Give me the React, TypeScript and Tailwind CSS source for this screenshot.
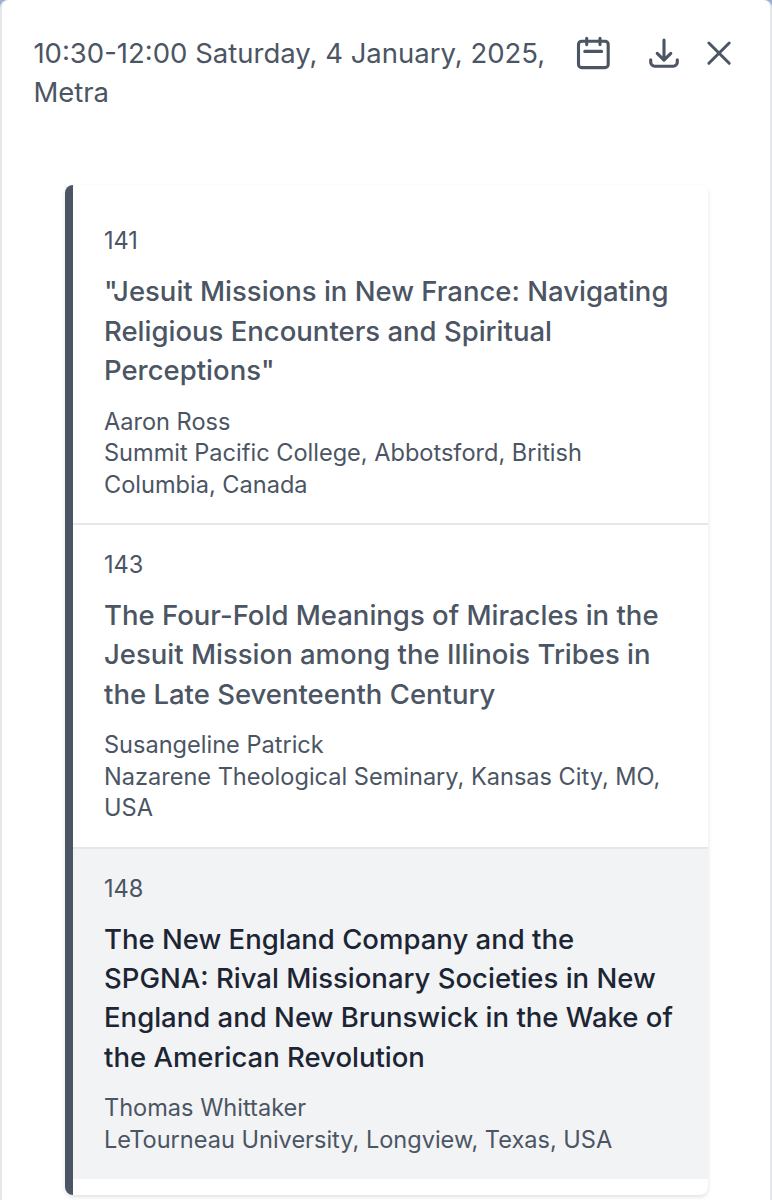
type Talk = { id: string; title: string[]; author: string; place: string[]; active?: boolean };

const talks: Talk[] = [
  {
    id: '141',
    title: ['"Jesuit Missions in New France: Navigating', 'Religious Encounters and Spiritual', 'Perceptions"'],
    author: 'Aaron Ross',
    place: ['Summit Pacific College, Abbotsford, British', 'Columbia, Canada'],
  },
  {
    id: '143',
    title: ['The Four-Fold Meanings of Miracles in the', 'Jesuit Mission among the Illinois Tribes in', 'the Late Seventeenth Century'],
    author: 'Susangeline Patrick',
    place: ['Nazarene Theological Seminary, Kansas City, MO,', 'USA'],
  },
  {
    id: '148',
    title: ['The New England Company and the', 'SPGNA: Rival Missionary Societies in New', 'England and New Brunswick in the Wake of', 'the American Revolution'],
    author: 'Thomas Whittaker',
    place: ['LeTourneau University, Longview, Texas, USA'],
    active: true,
  },
];

function Lines({ lines }: { lines: string[] }) {
  return (
    <>
      {lines.map((line) => (
        <span key={line} className="block whitespace-nowrap">{line}</span>
      ))}
    </>
  );
}

function TalkRow({ talk }: { talk: Talk }) {
  return (
    <li
      className={
        talk.active
          ? 'bg-[#f2f3f5] px-[31px] py-[23.5px]'
          : 'border-b-2 border-[#e5e7eb] px-[31px] py-[23.5px]'
      }
    >
      <p>{talk.id}</p>
      <h3
        className={
          talk.active
            ? 'my-[15.7px] text-[27.5px] leading-[39.25px] font-medium text-[#1c2534]'
            : 'my-[15.7px] text-[27.5px] leading-[39.25px] font-medium'
        }
      >
        <Lines lines={talk.title} />
      </h3>
      <p>{talk.author}</p>
      <p><Lines lines={talk.place} /></p>
    </li>
  );
}

export default function App() {
  return (
    <div className="h-[1200px] overflow-hidden bg-[#9dafd0]">
      <main className="h-[1230px] rounded-[8px] border-x-2 border-[#e5e7eb] bg-white font-['Inter',sans-serif] text-[#4b5563] [font-optical-sizing:none]">
        <header className="flex h-[185px] items-start pt-[33.5px] pl-[31.4px]">
          <h2 className="w-[541.2px] shrink-0 text-[27.5px] leading-[39.25px]">
            <Lines lines={['10:30-12:00 Saturday, 4 January, 2025,', 'Metra']} />
          </h2>
          <div className="flex pt-[1.5px]">
            <button aria-label="Add to calendar" className="h-9 w-[73px]">
              <svg width="36" height="36" viewBox="575 35 36 36" fill="none" stroke="#4b5563" strokeWidth="3.1" strokeLinecap="round" strokeLinejoin="round">
                <rect x="578.5" y="41.2" width="29.7" height="26.4" rx="3.2" />
                <path d="M586.7 38.2v6.4M600 38.2v6.4M584.8 51.4h16.8" />
              </svg>
            </button>
            <button aria-label="Download" className="h-9 w-[56px]">
              <svg width="36" height="36" viewBox="648 35 36 36" fill="none" stroke="#4b5563" strokeWidth="3.1" strokeLinecap="round" strokeLinejoin="round">
                <path d="M664 40v20.2M657.2 53.4l6.8 6.8 6.8-6.8M650.7 59.8v2.4a4 4 0 0 0 4 4h18.6a4 4 0 0 0 4-4v-2.4" />
              </svg>
            </button>
            <button aria-label="Close" className="h-9 w-[36px]">
              <svg width="36" height="36" viewBox="704 35 36 36" fill="none" stroke="#4b5563" strokeWidth="3" strokeLinecap="round">
                <path d="M708.9 43l20.3 20.3M729.2 43l-20.3 20.3" />
              </svg>
            </button>
          </div>
        </header>
        <ul className="mr-[62.5px] ml-[63px] rounded-[8px] border-l-8 border-[#4b5563] pt-[16.7px] pb-[16px] text-[23.55px] leading-[31.4px] shadow-[0_2px_4px_rgba(0,0,0,0.12)]">
          {talks.map((talk) => (
            <TalkRow key={talk.id} talk={talk} />
          ))}
        </ul>
      </main>
    </div>
  );
}
